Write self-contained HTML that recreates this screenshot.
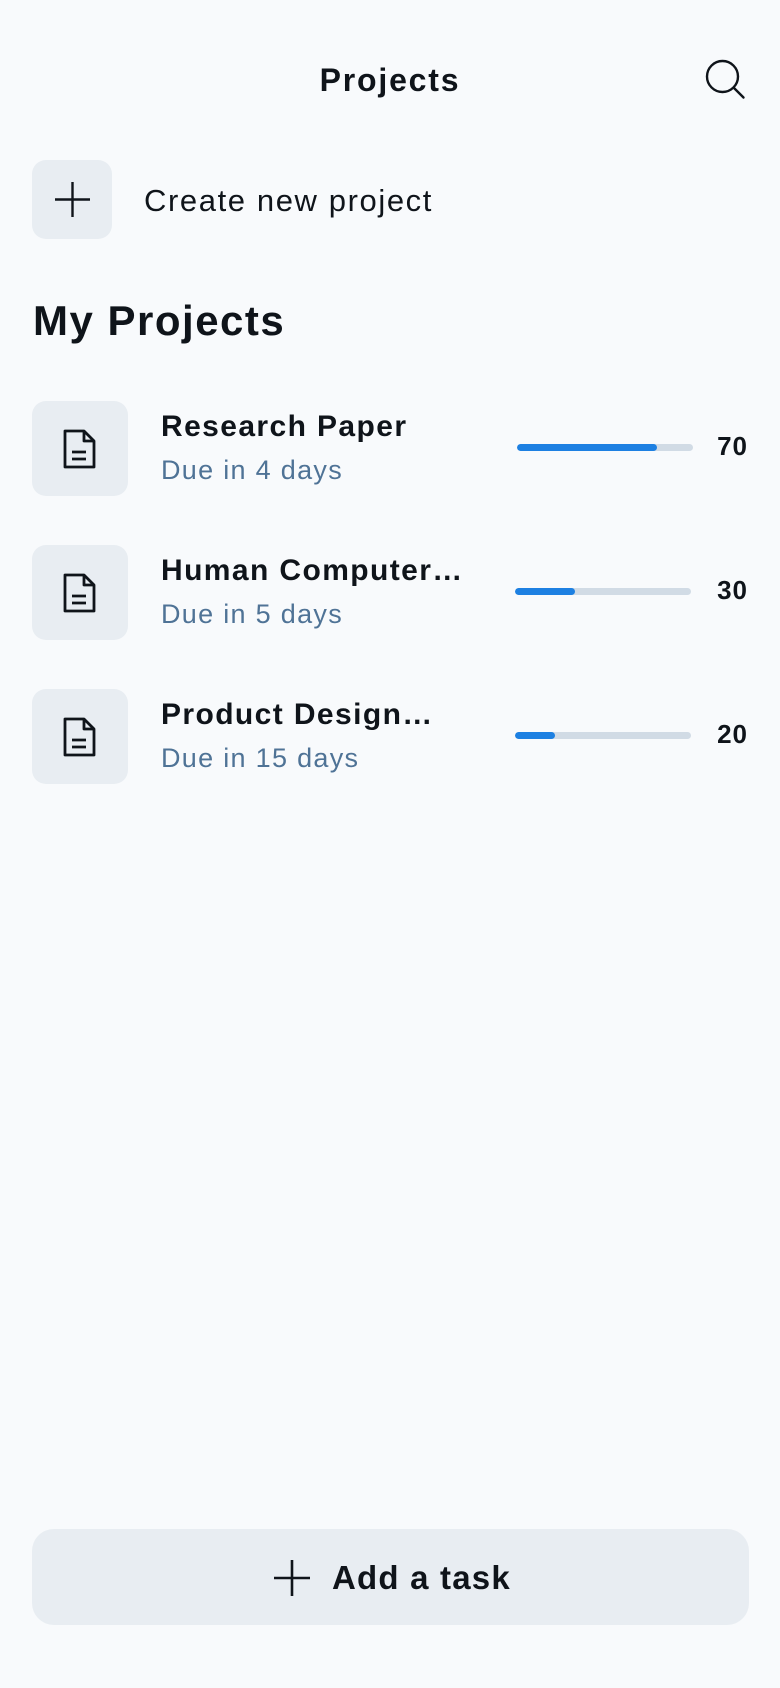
<!DOCTYPE html>
<html><head><meta charset="utf-8"><style>
*{margin:0;padding:0;box-sizing:border-box}
body{width:780px;height:1688px;background:#f8fafc;font-family:"Liberation Sans",sans-serif;color:#0f141a;position:relative;overflow:hidden}
.abs{position:absolute}
.title{left:0;width:780px;top:62px;text-align:center;font-size:32px;font-weight:700;line-height:36px;letter-spacing:1.8px}
.box{background:#e8edf2;border-radius:14px}
.h2{left:33px;top:298px;font-size:42px;font-weight:700;line-height:46px;letter-spacing:1.5px}
.rt{left:161px;font-size:30px;font-weight:600;line-height:34px;white-space:nowrap;letter-spacing:1.4px}
.rd{left:161px;font-size:27px;color:#4f7396;line-height:30px;letter-spacing:1.3px}
.bar{left:516px;width:176px;height:7px;border-radius:4px;background:#d1dbe5;overflow:hidden}
.bar div{height:100%;background:#1d80e2;border-radius:4px}
.num{right:32px;font-size:26px;font-weight:600;line-height:30px;letter-spacing:1px}
</style></head><body>
<div class="abs title">Projects</div>
<svg class="abs" style="left:704px;top:58px" width="42" height="42" viewBox="0 0 42 42" fill="none" stroke="#0f141a" stroke-width="2.4" stroke-linecap="round"><circle cx="18.5" cy="18.5" r="15.5"/><path d="M30 30L39.5 39.5"/></svg>

<div class="abs box" style="left:32px;top:160px;width:80px;height:79px"></div>
<svg class="abs" style="left:54px;top:181px" width="37" height="37" viewBox="0 0 37 37" stroke="#0f141a" stroke-width="2.4"><path d="M18.5 1v35M1 18.5h35"/></svg>
<div class="abs" style="left:144px;top:184px;font-size:31px;line-height:34px;letter-spacing:1.6px">Create new project</div>

<div class="abs h2">My Projects</div>

<!-- row 1 -->
<div class="abs box" style="left:32px;top:401px;width:96px;height:95px"></div>
<svg class="abs" style="left:62px;top:429px" width="36" height="40" viewBox="0 0 36 40" fill="none" stroke="#0f141a" stroke-width="2.8" stroke-linejoin="round"><path d="M3 2h19l10 10v26H3z"/><path d="M22 2v10h10"/><path d="M10 23h14M10 30h14"/></svg>
<div class="abs rt" style="top:410px">Research Paper</div>
<div class="abs rd" style="top:455px">Due in 4 days</div>
<div class="abs bar" style="top:444px;left:517px"><div style="width:140px"></div></div>
<div class="abs num" style="top:431px">70</div>

<!-- row 2 -->
<div class="abs box" style="left:32px;top:545px;width:96px;height:95px"></div>
<svg class="abs" style="left:62px;top:573px" width="36" height="40" viewBox="0 0 36 40" fill="none" stroke="#0f141a" stroke-width="2.8" stroke-linejoin="round"><path d="M3 2h19l10 10v26H3z"/><path d="M22 2v10h10"/><path d="M10 23h14M10 30h14"/></svg>
<div class="abs rt" style="top:554px">Human Computer…</div>
<div class="abs rd" style="top:599px">Due in 5 days</div>
<div class="abs bar" style="top:588px;left:515px"><div style="width:60px"></div></div>
<div class="abs num" style="top:575px">30</div>

<!-- row 3 -->
<div class="abs box" style="left:32px;top:689px;width:96px;height:95px"></div>
<svg class="abs" style="left:62px;top:717px" width="36" height="40" viewBox="0 0 36 40" fill="none" stroke="#0f141a" stroke-width="2.8" stroke-linejoin="round"><path d="M3 2h19l10 10v26H3z"/><path d="M22 2v10h10"/><path d="M10 23h14M10 30h14"/></svg>
<div class="abs rt" style="top:698px">Product Design…</div>
<div class="abs rd" style="top:743px">Due in 15 days</div>
<div class="abs bar" style="top:732px;left:515px"><div style="width:40px"></div></div>
<div class="abs num" style="top:719px">20</div>

<!-- button -->
<div class="abs box" style="left:32px;top:1529px;width:717px;height:96px;border-radius:22px"></div>
<svg class="abs" style="left:273px;top:1559px" width="38" height="38" viewBox="0 0 38 38" stroke="#0f141a" stroke-width="2.6"><path d="M19 1v36M1 19h36"/></svg>
<div class="abs" style="left:332px;top:1559px;font-size:33px;font-weight:700;line-height:38px;letter-spacing:1.2px">Add a task</div>
</body></html>
